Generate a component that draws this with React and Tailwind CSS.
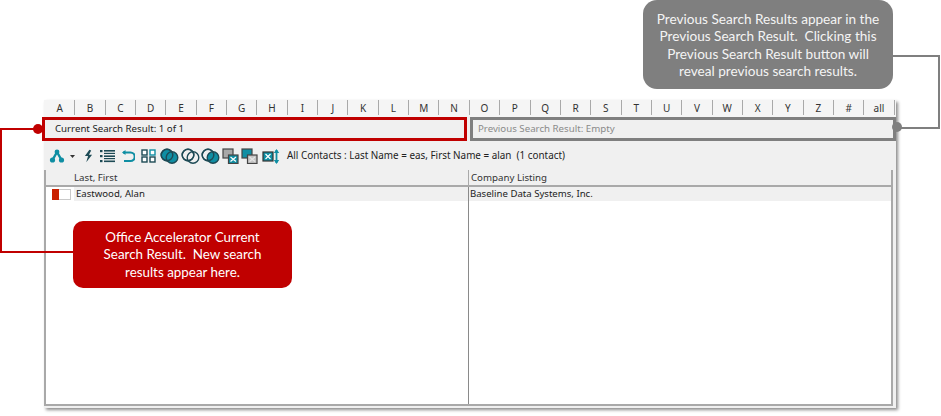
const TABS = "A B C D E F G H I J K L M N O P Q R S T U V W X Y Z # all".split(" ");
const TEAL = "#0f8ea3";
const DARK = "#1d4a55";

function Circles({ a, b }) {
  return (
    <svg width="19" height="16" viewBox="0 0 19 16">
      <circle cx="7" cy="7" r="5.8" fill={a} stroke={DARK} strokeWidth="1.4" />
      <circle cx="12" cy="9.5" r="5.8" fill={b} stroke={DARK} strokeWidth="1.4" />
      <circle cx="7" cy="7" r="5.8" fill="none" stroke={DARK} strokeWidth="1.4" />
    </svg>
  );
}

function Squares({ first }) {
  const back = first ? "#a8a8a8" : TEAL;
  const front = first ? TEAL : "#c4c4c4";
  return (
    <svg width="17" height="16" viewBox="0 0 17 16">
      <rect x="1" y="1" width="10" height="9" fill={back} stroke="#444" strokeWidth="1.2" />
      <rect x="6.5" y="7" width="9.5" height="8.5" fill={front} stroke="#444" strokeWidth="1.2" />
      <path d="M8.5 9 L14 13.5 M14 9 L8.5 13.5" stroke={first ? "#fff" : "#e4e4e4"} strokeWidth="1.2" />
    </svg>
  );
}

function Toolbar() {
  return (
    <div className="flex items-center h-[16px] shrink-0">
      <svg width="16" height="14" viewBox="0 0 15 14" className="ml-[5px]">
        <path d="M7.5 3 L3 11 M7.5 3 L12 11" stroke={TEAL} strokeWidth="2.4" fill="none" />
        <circle cx="7.5" cy="3" r="2.4" fill={TEAL} />
        <circle cx="3" cy="11" r="2.6" fill={TEAL} />
        <circle cx="12" cy="11" r="2.6" fill={TEAL} />
      </svg>
      <svg width="5" height="3" viewBox="0 0 5 3" className="ml-[5px]">
        <path d="M0 0 H5 L2.5 3 Z" fill="#333" />
      </svg>
      <svg width="9" height="14" viewBox="0 0 10 14" className="ml-[9px]">
        <path d="M6 0 L1 7 H4.5 L2.5 14 L9 5.5 H5.5 L8 1 Z" fill={DARK} />
      </svg>
      <svg width="15" height="14" viewBox="0 0 15 14" className="ml-[7px]">
        <g fill={DARK}>
          <rect x="0" y="1" width="2.5" height="2.2" />
          <rect x="0" y="6" width="2.5" height="2.2" />
          <rect x="0" y="11" width="2.5" height="2.2" />
          <rect x="4" y="1" width="11" height="1.6" />
          <rect x="4" y="3.8" width="11" height="1.2" />
          <rect x="4" y="6.4" width="11" height="1.6" />
          <rect x="4" y="9" width="11" height="1.2" />
          <rect x="4" y="11.5" width="11" height="1.6" />
        </g>
      </svg>
      <svg width="13" height="13" viewBox="0 0 13 13" className="ml-[7px]">
        <path d="M1 2.5 H8.5 A3.7 3.7 0 0 1 8.5 11 H2" fill="none" stroke={TEAL} strokeWidth="2.2" />
        <path d="M0 2.5 L3.5 0 V5 Z" fill={TEAL} />
      </svg>
      <svg width="15" height="14" viewBox="0 0 15 14" className="ml-[6px]">
        <g fill="#fff" stroke={DARK} strokeWidth="1.4">
          <rect x="1" y="1" width="5" height="5" />
          <rect x="9" y="1" width="5" height="5" stroke={TEAL} />
          <rect x="1" y="8" width="5" height="5" />
          <rect x="9" y="8" width="5" height="5" />
        </g>
      </svg>
      <div className="ml-[4px] flex"><Circles a={TEAL} b={TEAL} /></div>
      <div className="ml-[2px] flex"><Circles a="none" b="none" /></div>
      <div className="ml-[1px] flex"><Circles a="none" b={TEAL} /></div>
      <div className="ml-[2px] flex"><Squares first /></div>
      <div className="ml-[2px] flex"><Squares /></div>
      <svg width="18" height="15" viewBox="0 0 18 15" className="ml-[4px]">
        <rect x="1" y="3" width="10" height="9" fill={TEAL} stroke="#333" strokeWidth="1.2" />
        <path d="M3.5 5 L8.5 10 M8.5 5 L3.5 10" stroke="#fff" strokeWidth="1.2" />
        <path d="M14.5 1 V14" stroke={TEAL} strokeWidth="1.8" />
        <path d="M11.8 4 L14.5 0 L17.2 4 Z M11.8 11 L14.5 15 L17.2 11 Z" fill={TEAL} />
      </svg>
      <span className="ml-[7px] whitespace-pre text-[9.9px] leading-none text-[#222]">
        All Contacts : Last Name = eas, First Name = alan  (1 contact)
      </span>
    </div>
  );
}

export default function App() {
  return (
    <div className="relative w-[941px] h-[416px] overflow-hidden bg-white font-['Noto_Sans','Open_Sans',sans-serif]">
      <div className="pt-[100px] pl-[44px]">
        <div className="flex flex-col w-[852px] h-[308px] bg-[#f0f0f0] shadow-[2px_2px_3px_rgba(0,0,0,0.45)]">
          {/* alphabet tabs */}
          <div className="flex h-[17px] pl-[1px] shrink-0 bg-[#f5f5f5]">
            {TABS.map((t) => (
              <div
                key={t}
                className="w-[30.35px] h-[15px] flex items-center justify-center border-r border-[#a9a9a9] text-[10px] leading-none text-[#333]"
              >
                {t}
              </div>
            ))}
          </div>

          {/* search result boxes */}
          <div className="flex gap-[3px] h-[24px] -ml-[2px] shrink-0">
            <div className="w-[425px] flex items-center border-[3px] border-[#c00000] pl-[10px] pt-[1px] text-[9.7px] text-[#222] bg-[#f0f0f0]">
              Current Search Result: 1 of 1
            </div>
            <div className="w-[426px] flex items-center border-[3px] border-[#7f7f7f] pl-[5px] pt-[1px] text-[9.7px] text-[#8a8a8a] bg-[#f0f0f0]">
              Previous Search Result: Empty
            </div>
          </div>

          <div className="flex items-start pt-[7px] h-[29px] shrink-0">
            <Toolbar />
          </div>

          {/* contact list */}
          <div className="flex-1 flex flex-col mr-[3px] mb-[2px] border-l-2 border-b-2 border-r-2 border-[#a9a9a9] bg-white min-h-0">
            <div className="flex h-[17px] shrink-0 bg-[#f0f0f0] border-b-2 border-[#a9a9a9] text-[9.7px] text-[#333]">
              <div className="w-[423px] pl-[28px] pt-[1px] flex items-center border-r border-[#a9a9a9]">Last, First</div>
              <div className="flex-1 pl-[2px] pt-[1px] flex items-center">Company Listing</div>
            </div>
            <div className="flex-1 flex min-h-0">
              <div className="w-[423px] border-r border-[#8a8a8a]">
                <div className="flex items-center h-[14px] text-[9.6px] text-[#222]">
                  <div className="flex h-[11px] w-[19px] ml-[6px] border border-[#c9c9c9] bg-white">
                    <div className="w-[7px] -m-px h-[11px] bg-[#c92000]" />
                  </div>
                  <div className="flex-1 h-full ml-[3px] pl-[2px] pt-[1px] flex items-center bg-[#f0f0f0]">Eastwood, Alan</div>
                </div>
              </div>
              <div className="flex-1">
                <div className="h-[14px] pl-[1px] pt-[1px] flex items-center bg-[#f0f0f0] text-[9.6px] text-[#222]">
                  Baseline Data Systems, Inc.
                </div>
              </div>
            </div>
          </div>
        </div>
      </div>

      {/* red connector and callout */}
      <div className="absolute left-0 top-[128px] w-[40px] h-[125px] border-l-2 border-t-2 border-[#c00000]" />
      <div className="absolute left-0 top-[251px] w-[73px] h-[2px] bg-[#c00000]" />
      <div className="absolute left-[33px] top-[124px] w-[10px] h-[10px] rounded-full bg-[#c00000]" />
      <div className="absolute left-[73px] top-[221px] w-[219px] h-[67px] pt-[1px] rounded-[10px] bg-[#c00000] flex items-center justify-center text-center text-white text-[13.4px] leading-[17.6px] font-['Lato','Open_Sans',sans-serif]">
        <div className="whitespace-pre">{"Office Accelerator Current\nSearch Result.  New search\nresults appear here."}</div>
      </div>

      {/* gray connector and callout */}
      <div className="absolute left-[893px] top-[55px] w-[47px] h-[74px] border-t-2 border-r-2 border-b-2 border-[#7f7f7f]" />
      <div className="absolute left-[892px] top-[122px] w-[10px] h-[10px] rounded-full bg-[#7f7f7f]" />
      <div className="absolute left-[643px] top-0 w-[250px] h-[89px] pt-[2px] rounded-[14px] bg-[#7f7f7f] flex items-center justify-center text-center text-[#f4f4f4] text-[13.6px] leading-[17.4px] font-['Lato','Open_Sans',sans-serif]">
        <div className="whitespace-pre">{"Previous Search Results appear in the\nPrevious Search Result.  Clicking this\nPrevious Search Result button will\nreveal previous search results."}</div>
      </div>
    </div>
  );
}
